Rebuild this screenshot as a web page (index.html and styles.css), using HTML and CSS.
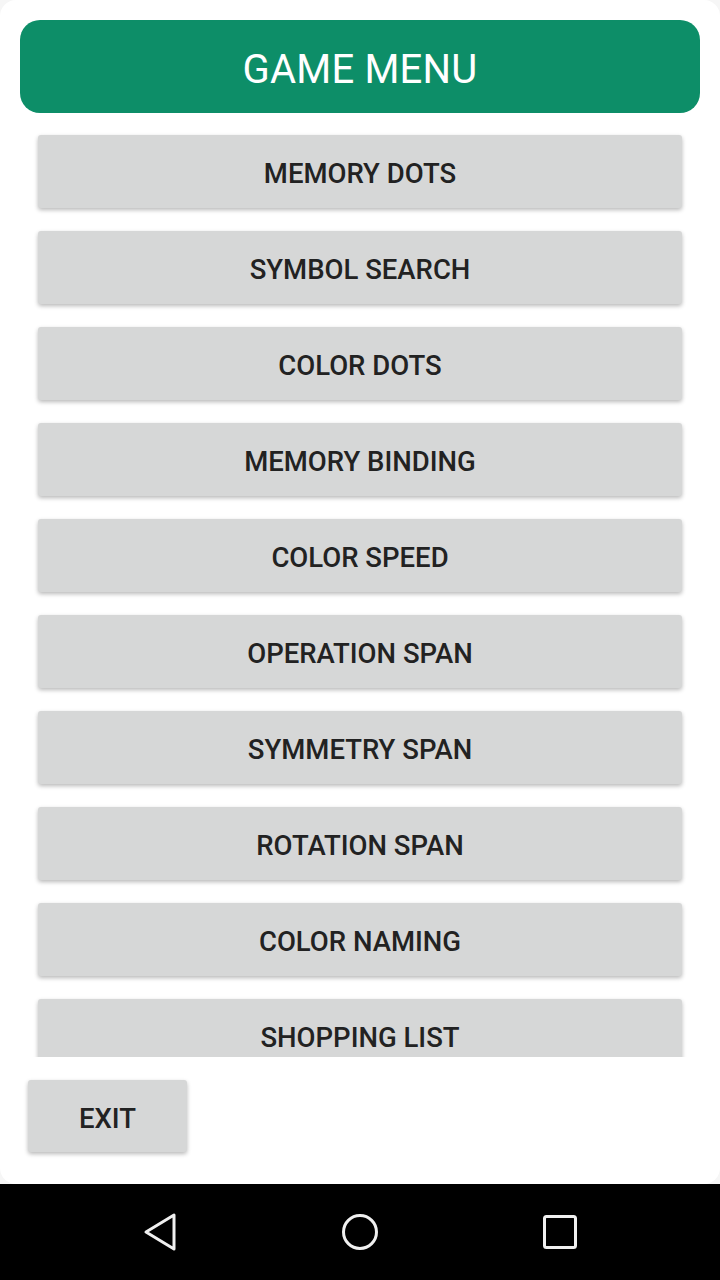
FILE: index.html
```html
<!DOCTYPE html>
<html>
<head>
<meta charset="utf-8">
<link rel="stylesheet" href="styles.css">
</head>
<body>
<div class="screen">
  <div class="card">
    <div class="header">GAME MENU</div>
    <div class="list">
      <div class="btn">MEMORY DOTS</div>
      <div class="btn">SYMBOL SEARCH</div>
      <div class="btn">COLOR DOTS</div>
      <div class="btn">MEMORY BINDING</div>
      <div class="btn">COLOR SPEED</div>
      <div class="btn">OPERATION SPAN</div>
      <div class="btn">SYMMETRY SPAN</div>
      <div class="btn">ROTATION SPAN</div>
      <div class="btn">COLOR NAMING</div>
      <div class="btn">SHOPPING LIST</div>
    </div>
    <div class="footer">
      <div class="btn exit">EXIT</div>
    </div>
  </div>
  <div class="navbar">
    <svg class="nav-icon" width="40" height="44" viewBox="0 0 40 44">
      <path d="M34 5 L34 39 L6 22 Z" fill="none" stroke="#f0f0f0" stroke-width="3" stroke-linejoin="round"/>
    </svg>
    <svg class="nav-icon" width="40" height="44" viewBox="0 0 40 44">
      <circle cx="20" cy="22" r="16.5" fill="none" stroke="#f0f0f0" stroke-width="3"/>
    </svg>
    <svg class="nav-icon" width="40" height="44" viewBox="0 0 40 44">
      <rect x="4.5" y="6.5" width="31" height="31" rx="2" fill="none" stroke="#f0f0f0" stroke-width="3"/>
    </svg>
  </div>
</div>
</body>
</html>
```
FILE: styles.css
```css
html, body {
  margin: 0;
  padding: 0;
}
body {
  background: #f6f6f6;
  font-family: Roboto, "Liberation Sans", sans-serif;
}
.screen {
  width: 720px;
  height: 1280px;
  display: flex;
  flex-direction: column;
}
.card {
  height: 1184px;
  background: #ffffff;
  border-radius: 16px;
  display: flex;
  flex-direction: column;
  box-sizing: border-box;
  padding-top: 20px;
}
.header {
  margin: 0 20px;
  height: 93px;
  background: #0d8e68;
  border-radius: 20px;
  color: #ffffff;
  font-size: 40px;
  font-weight: 400;
  display: flex;
  align-items: center;
  justify-content: center;
  padding-top: 6px;
  box-sizing: border-box;
  letter-spacing: 0.2px;
}
.list {
  height: 944px;
  overflow: hidden;
  display: flex;
  flex-direction: column;
  gap: 23px;
  padding: 22px 38px 4px 38px;
  box-sizing: border-box;
}
.btn {
  flex: none;
  height: 73px;
  background: #d6d7d7;
  border-radius: 3px;
  box-shadow: 0 2px 4px rgba(0, 0, 0, 0.28);
  color: #222222;
  font-size: 27.5px;
  font-weight: 500;
  display: flex;
  align-items: center;
  justify-content: center;
  padding-top: 4px;
  box-sizing: border-box;
}
.footer {
  padding: 23px 0 0 28px;
}
.exit {
  width: 159px;
  height: 72px;
}
.navbar {
  flex: 1;
  background: #000000;
  display: flex;
  align-items: center;
  justify-content: center;
  gap: 160px;
}
.nav-icon {
  display: block;
}
```
